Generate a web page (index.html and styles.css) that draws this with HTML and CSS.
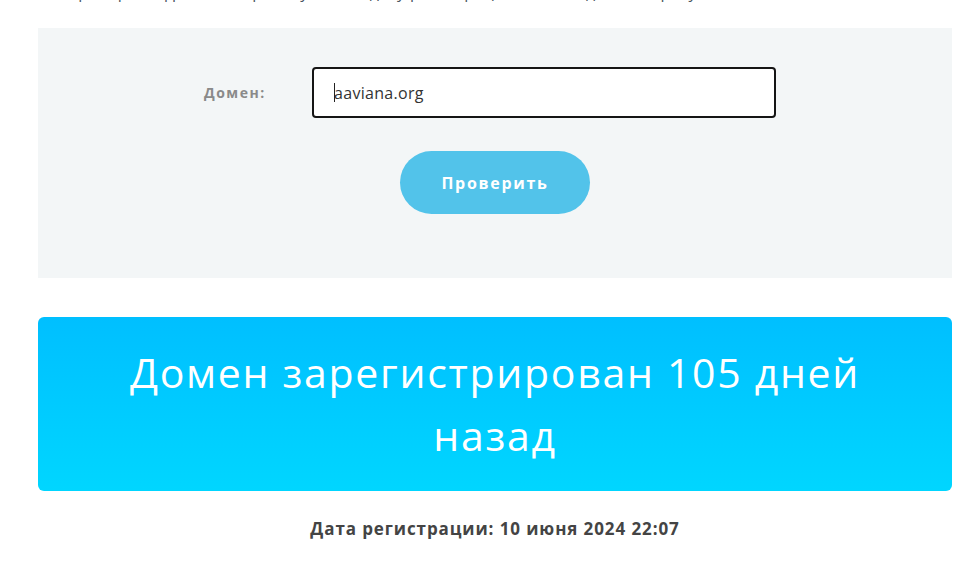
FILE: index.html
```html
<!DOCTYPE html>
<html lang="ru">
<head>
<meta charset="utf-8">
<link rel="stylesheet" href="styles.css">
</head>
<body>
<div class="page">
  <p class="intro">Проверьте фрагмент срока, узнайте дату регистрации любого домена сразу</p>
  <div class="panel">
    <div class="row">
      <label class="label">Домен:</label>
      <div class="input"><span class="caret"></span>aaviana.org</div>
    </div>
    <div class="actions">
      <button class="btn">Проверить</button>
    </div>
  </div>
  <div class="banner">Домен зарегистрирован 105 дней<br>назад</div>
  <p class="date">Дата регистрации: 10 июня 2024 22:07</p>
</div>
</body>
</html>
```

FILE: styles.css
```css
html, body {
  margin: 0;
  padding: 0;
  background: #fff;
  overflow: hidden;
}
.page {
  width: 914px;
  margin-left: 38px;
  font-family: "Open Sans", "Liberation Sans", sans-serif;
}
.intro {
  margin: -18px 0 0 28px;
  height: 20px;
  font-size: 16px;
  line-height: 20px;
  color: #4a5560;
  white-space: nowrap;
  overflow: hidden;
  letter-spacing: 0.5px;
}
.panel {
  margin-top: 26px;
  height: 250px;
  background: #f3f6f7;
  box-sizing: border-box;
  padding-top: 39px;
}
.row {
  display: flex;
  align-items: center;
  margin-left: 166px;
}
.label {
  width: 108px;
  font-size: 14px;
  font-weight: 700;
  color: #8a8a8a;
  letter-spacing: 1.5px;
}
.input {
  width: 464px;
  height: 51px;
  box-sizing: border-box;
  border: 2px solid #151515;
  border-radius: 4px;
  background: #fff;
  display: flex;
  align-items: center;
  padding-left: 20px;
  font-size: 16px;
  color: #333;
  position: relative;
  letter-spacing: 0.3px;
}
.caret {
  position: absolute;
  left: 20px;
  top: 14px;
  width: 1px;
  height: 19px;
  background: #222;
}
.actions {
  display: flex;
  justify-content: center;
  margin-top: 33px;
}
.btn {
  width: 190px;
  height: 63px;
  border: none;
  border-radius: 32px;
  background: #52c3ea;
  color: #fff;
  font-family: "Open Sans", "Liberation Sans", sans-serif;
  font-size: 16px;
  font-weight: 700;
  letter-spacing: 1.7px;
}
.banner {
  margin-top: 39px;
  height: 174px;
  box-sizing: border-box;
  border-radius: 6px;
  background: linear-gradient(180deg, #00bfff 0%, #00d6ff 100%);
  color: #fff;
  text-align: center;
  font-size: 41px;
  line-height: 63px;
  padding-top: 24px;
  letter-spacing: 1.7px;
}
.date {
  margin: 26px 0 0;
  text-align: center;
  font-size: 17px;
  font-weight: 700;
  color: #444;
  letter-spacing: 0.9px;
}
```
